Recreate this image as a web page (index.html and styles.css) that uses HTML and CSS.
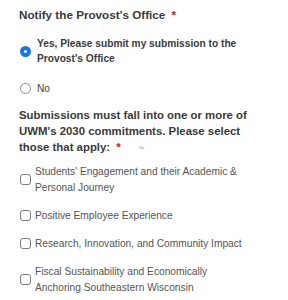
FILE: index.html
```html
<!DOCTYPE html>
<html>
<head>
<meta charset="utf-8">
<link rel="stylesheet" href="styles.css">
</head>
<body>
<div class="form">
  <div class="field">
    <div class="title">Notify the Provost's Office <span class="req">*</span></div>
    <div class="radios">
      <label class="opt">
        <span class="radio checked"></span>
        <span class="radio-text bold">Yes, Please submit my submission to the Provost's Office</span>
      </label>
      <label class="opt">
        <span class="radio"></span>
        <span class="radio-text">No</span>
      </label>
    </div>
  </div>
  <div class="field field2">
    <div class="heading">Submissions must fall into one or more of UWM's 2030 commitments. Please select those that apply: <span class="req">*</span><span class="tiny">Tot</span></div>
    <div class="checks">
      <label class="chk">
        <span class="box"></span>
        <span class="chk-text">Students' Engagement and their Academic &amp; Personal Journey</span>
      </label>
      <label class="chk">
        <span class="box"></span>
        <span class="chk-text">Positive Employee Experience</span>
      </label>
      <label class="chk">
        <span class="box"></span>
        <span class="chk-text">Research, Innovation, and Community Impact</span>
      </label>
      <label class="chk">
        <span class="box"></span>
        <span class="chk-text">Fiscal Sustainability and Economically Anchoring Southeastern Wisconsin</span>
      </label>
    </div>
  </div>
</div>
</body>
</html>
```
FILE: styles.css
```css
html, body {
  margin: 0;
  padding: 0;
  background: #ffffff;
}
body {
  font-family: "Liberation Sans", Arial, Helvetica, sans-serif;
  color: #3a3a3a;
}
.form {
  padding: 7px 20px 0 19px;
}
.title {
  font-size: 11.7px;
  font-weight: bold;
  line-height: 16px;
  color: #3b3b3b;
}
.req {
  color: #c8102e;
  font-weight: bold;
  margin-left: 3px;
}
.radios {
  margin-top: 13px;
  display: flex;
  flex-direction: column;
  gap: 15px;
}
.opt {
  display: flex;
  align-items: center;
  gap: 6px;
  padding-left: 1px;
}
.radio {
  flex: none;
  width: 9px;
  height: 9px;
  border: 1px solid #8a8a8a;
  border-radius: 50%;
  box-sizing: content-box;
}
.radio.checked {
  width: 3px;
  height: 3px;
  border: 4px solid #1677e5;
  background: #fff;
}
.radio-text {
  font-size: 10.2px;
  line-height: 15px;
  color: #444;
}
.radio-text.bold {
  font-weight: bold;
  color: #3c3c3c;
  max-width: 210px;
}
.field2 {
  margin-top: 11px;
}
.heading {
  font-size: 11.4px;
  font-weight: bold;
  line-height: 16px;
  color: #3a3a3a;
  max-width: 240px;
}
.tiny {
  font-size: 4px;
  font-weight: normal;
  color: #888;
  margin-left: 18px;
  vertical-align: middle;
}
.checks {
  margin-top: 8px;
  display: flex;
  flex-direction: column;
  gap: 12px;
}
.chk {
  display: flex;
  align-items: center;
  gap: 4px;
  padding-left: 1px;
}
.box {
  flex: none;
  width: 9px;
  height: 9px;
  border: 1.3px solid #7a7a7a;
  border-radius: 3px;
  box-sizing: content-box;
}
.chk-text {
  font-size: 10.2px;
  line-height: 16px;
  color: #555;
  max-width: 215px;
}
```
